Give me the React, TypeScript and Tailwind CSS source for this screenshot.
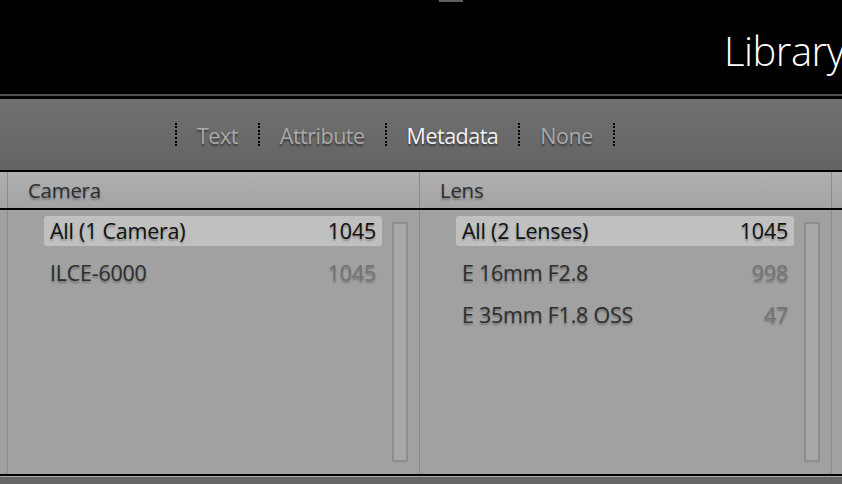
import React from 'react'

const font = { fontFamily: '"Open Sans", "Noto Sans", sans-serif' }

type Row = { label: string; count: string; selected?: boolean }

const cameras: Row[] = [
  { label: 'All (1 Camera)', count: '1045', selected: true },
  { label: 'ILCE-6000', count: '1045' },
]

const lenses: Row[] = [
  { label: 'All (2 Lenses)', count: '1045', selected: true },
  { label: 'E 16mm F2.8', count: '998' },
  { label: 'E 35mm F1.8 OSS', count: '47' },
]

function Dots() {
  return (
    <div className="flex h-[26px] flex-col justify-between py-[1px]">
      {Array.from({ length: 7 }).map((_, i) => (
        <div key={i} className="h-[2px] w-[2px] bg-black" />
      ))}
    </div>
  )
}

function FilterTab({ label, active }: { label: string; active?: boolean }) {
  return (
    <span
      className={`px-[20px] pt-[3px] text-[21.5px] leading-none tracking-[-0.5px] [text-shadow:0_2px_2px_rgba(0,0,0,0.5)] ${
        active ? 'text-[#f2f2f2]' : 'text-[#a9a9a9]'
      }`}
    >
      {label}
    </span>
  )
}

function Column({ rows }: { rows: Row[] }) {
  return (
    <div className="flex h-full w-[411px] pl-[36px] pt-[6px]">
      <div className="flex w-[338px] flex-col gap-[12px]">
        {rows.map((r) => (
          <div
            key={r.label}
            className={`flex h-[30px] items-center justify-between rounded-[3px] px-[6px] text-[21.5px] tracking-[-0.25px] [text-shadow:0_2px_2px_rgba(0,0,0,0.3)] ${
              r.selected ? 'bg-[#c0c0c0] text-[#111]' : 'text-[#2e2e2e]'
            }`}
          >
            <span>{r.label}</span>
            <span className={r.selected ? 'text-[#111]' : 'text-[#747474]'}>{r.count}</span>
          </div>
        ))}
      </div>
      <div className="ml-[10px] mt-[6px] h-[240px] w-[16px] border-2 border-[#8d8d8d] bg-[#a8a8a8]" />
    </div>
  )
}

export default function App() {
  return (
    <div className="flex h-[484px] w-[842px] flex-col overflow-hidden bg-black" style={font}>
      <div className="h-[94px] shrink-0 overflow-hidden">
        <div className="ml-[439px] h-[2px] w-[24px] bg-[#5f5f5f]" />
        <div className="whitespace-nowrap pl-[724px] pt-[29px] text-[40px] font-light leading-none tracking-[-0.5px] text-white">
          Library
        </div>
      </div>
      <div className="h-[2px] shrink-0 bg-[#4f4f4f]" />
      <div className="h-[3px] shrink-0 bg-black" />

      <div className="flex h-[71px] shrink-0 items-center bg-gradient-to-b from-[#707070] to-[#646464] pl-[175px]">
        <Dots />
        <FilterTab label="Text" />
        <Dots />
        <FilterTab label="Attribute" />
        <Dots />
        <FilterTab label="Metadata" active />
        <Dots />
        <FilterTab label="None" />
        <Dots />
      </div>

      <div className="h-[2px] shrink-0 bg-black" />

      <div className="flex h-[36px] shrink-0 bg-gradient-to-b from-[#b0b0b0] to-[#a3a3a3] text-[20.5px] text-[#2e2e2e] [text-shadow:0_2px_2px_rgba(0,0,0,0.3)]">
        <div className="w-[7px]" />
        <div className="w-[1px] bg-[#8a8a8a]" />
        <div className="flex w-[411px] items-center pl-[20px] tracking-[-0.3px]">Camera</div>
        <div className="w-[1px] bg-[#8a8a8a]" />
        <div className="flex w-[411px] items-center pl-[20px] tracking-[-0.3px]">Lens</div>
        <div className="w-[1px] bg-[#8a8a8a]" />
      </div>

      <div className="h-[2px] shrink-0 bg-black" />

      <div className="flex h-[264px] shrink-0 bg-[#a1a1a1]">
        <div className="w-[7px]" />
        <div className="w-[1px] bg-[#8a8a8a]" />
        <Column rows={cameras} />
        <div className="w-[1px] bg-[#8a8a8a]" />
        <Column rows={lenses} />
        <div className="w-[1px] bg-[#8a8a8a]" />
      </div>

      <div className="h-[2px] shrink-0 bg-black" />
      <div className="h-[1px] shrink-0 bg-[#a9a9a9]" />
      <div className="flex-1 bg-[#666]" />
    </div>
  )
}
